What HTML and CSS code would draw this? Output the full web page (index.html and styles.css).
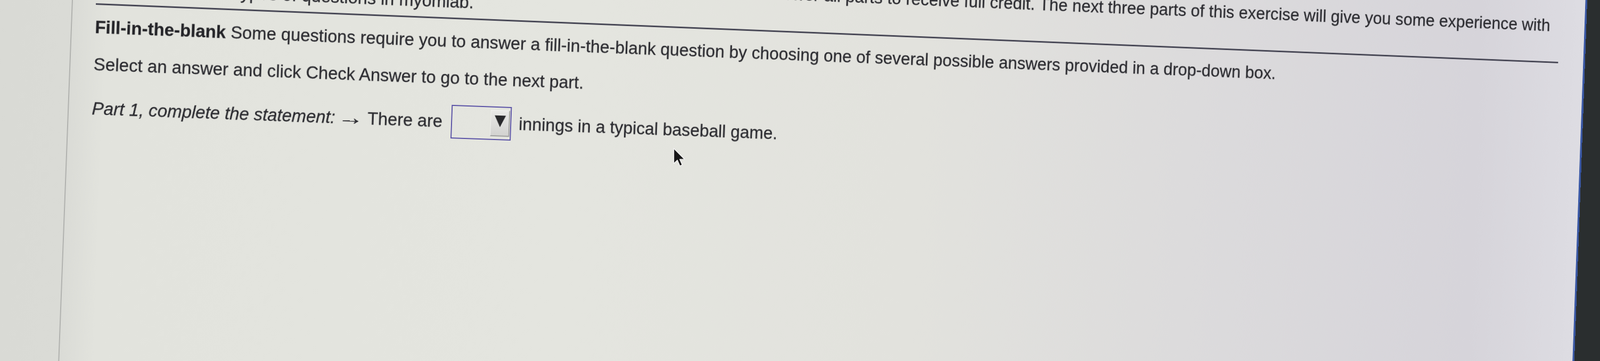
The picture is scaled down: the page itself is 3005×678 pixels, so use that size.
FILE: index.html
```html
<!DOCTYPE html>
<html lang="en">
<head>
<meta charset="utf-8">
<title>Fill-in-the-blank</title>
<link rel="stylesheet" href="styles.css">
</head>
<body>
<div class="screen">
  <aside class="sidebar"></aside>
  <main class="main">
    <div class="content">
      <p class="intro">This exercise has four parts. Each of the parts shows a new type of question. You must answer all parts to receive full credit. The next three parts of this exercise will give you some experience with all of the different types of questions in myomlab.</p>
      <hr class="rule">
      <p class="fill"><b class="term">Fill-in-the-blank</b> Some questions require you to answer a fill-in-the-blank question by choosing one of several possible answers provided in a drop-down box.</p>
      <p class="select">Select an answer and click Check Answer to go to the next part.</p>
      <p class="part"><i class="label">Part 1, complete the statement:</i> <span class="arrow">&rarr;</span> There are <span class="dropdown"><span class="dd-btn"><span class="dd-arrow"></span></span></span> innings in a typical baseball game.</p>
    </div>
  </main>
</div>
<svg class="cursor" width="25" height="38" viewBox="0 0 22 34" aria-hidden="true">
  <path d="M2 1.5 L2 27 L8 21.2 L12.2 31 L16.2 29.3 L12.1 19.8 L20.2 19.8 Z" fill="#161616" stroke="#f2f2f2" stroke-width="1.3" stroke-linejoin="round"/>
</svg>
</body>
</html>
```

FILE: styles.css
```css
html, body {
  margin: 0;
  padding: 0;
  width: 3005px;
  height: 678px;
  overflow: hidden;
  background: #2a2e2f;
}

.screen {
  display: flex;
  width: 3275px;
  height: 1100px;
  margin: -300px 0 0 -100px;
  box-sizing: border-box;
  border-right: 4px solid #3a58a4;
  transform-origin: 278px 362px;
  transform: perspective(9551px) rotateY(10deg) rotate(2.2deg);
  background: linear-gradient(90deg,
    #d8d9d4 0px,
    #dadbd6 234px,
    #e2e3dd 300px,
    #e4e5df 1200px,
    #e2e2dd 1900px,
    #dcdbdc 2450px,
    #d6d4da 3050px,
    #dcdbe1 3240px,
    #dedde3 3275px);
  font-family: "Liberation Sans", Arial, sans-serif;
  font-size: 33.7px;
  color: #2b2b30;
  -webkit-text-stroke: 0.3px #2b2b30;
}

.sidebar {
  flex: 0 0 232px;
  border-right: 2px solid #b0b1ae;
}

.main {
  flex: 1;
  padding: 214px 0 0 44px;
}

.content {
  width: 2940px;
}

.intro {
  margin: 0;
  line-height: 41px;
}

.rule {
  border: 0;
  height: 3px;
  margin: 10px 0 21px;
  background: #484856;
}

.fill {
  margin: 0;
  line-height: 41px;
}

.term {
  font-weight: bold;
  color: #242428;
}

.select {
  margin: 29px 0 0;
  line-height: 41px;
}

.part {
  margin: 31px 0 0;
  line-height: 41px;
}

.label {
  font-style: italic;
}

.arrow {
  display: inline-block;
  margin: 0 8px 0 3px;
  transform: scale(1.5, 1.1);
}

.dropdown {
  display: inline-block;
  overflow: hidden;
  vertical-align: -21px;
  width: 118px;
  height: 64px;
  box-sizing: border-box;
  margin: 0 5px 0 8px;
  padding: 5px 1px 0 0;
  border: 2px solid #5a52a6;
  -webkit-text-stroke: 0;
}

.dd-btn {
  display: block;
  width: 38px;
  height: 50px;
  margin-left: auto;
  box-sizing: border-box;
  border-style: solid;
  border-width: 1px 2px 2px 1px;
  border-color: #f4f4f3 #a0a0a0 #a0a0a0 #efefee;
  background: linear-gradient(#e9e9e7, #d2d2d0);
}

.dd-arrow {
  display: block;
  width: 0;
  height: 0;
  margin: 9px auto 0;
  border-left: 11px solid transparent;
  border-right: 11px solid transparent;
  border-top: 22px solid #29292c;
}

.cursor {
  position: absolute;
  left: 1263px;
  top: 277px;
}
```
